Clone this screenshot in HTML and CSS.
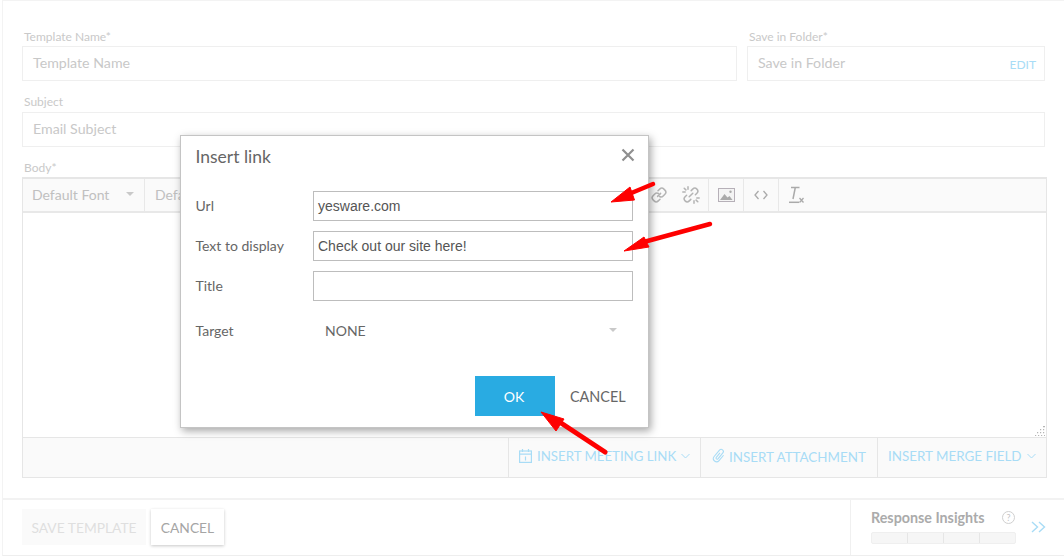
FILE: index.html
```html
<!DOCTYPE html>
<html lang="en">
<head>
<meta charset="utf-8">
<title>Template editor</title>
<link rel="stylesheet" href="styles.css">
</head>
<body>
<div class="page">
  <main class="form">
    <div class="row-top">
      <div class="field field-name">
        <label class="label">Template Name*</label>
        <div class="input">Template Name</div>
      </div>
      <div class="field field-folder">
        <label class="label">Save in Folder*</label>
        <div class="input input-folder"><span>Save in Folder</span><a class="edit">EDIT</a></div>
      </div>
    </div>
    <div class="field field-subject">
      <label class="label">Subject</label>
      <div class="input">Email Subject</div>
    </div>
    <div class="field field-body">
      <label class="label">Body*</label>
      <div class="editor">
        <div class="toolbar">
          <div class="tool-select font-select"><span>Default Font</span><i class="caret"></i></div>
          <div class="tool-select size-select"><span>Default</span></div>
          <div class="tool-spacer"></div>
          <div class="tool-group links">
            <svg class="ico" width="18" height="18" viewBox="0 0 18 18"><g fill="none" stroke="#b4b4b4" stroke-width="1.5" stroke-linecap="round"><path d="M7.6 10.4l3-3"/><path d="M8 4.8l1.7-1.7a3 3 0 0 1 4.2 0l1 1a3 3 0 0 1 0 4.2l-1.7 1.7a3 3 0 0 1-3.6.5"/><path d="M10 13.2l-1.7 1.700a3 3 0 0 1-4.2 0l-1-1a3 3 0 0 1 0-4.2l1.7-1.7a3 3 0 0 1 3.600-.5"/></g></svg>
            <svg class="ico" width="18" height="18" viewBox="0 0 18 18"><g fill="none" stroke="#b4b4b4" stroke-width="1.5" stroke-linecap="round"><path d="M9.200 4.600l1.500-1.500a3 3 0 0 1 4.200 0l0 0a3 3 0 0 1 0 4.200L13.400 8.800"/><path d="M8.800 13.400l-1.500 1.500a3 3 0 0 1-4.200 0l0 0a3 3 0 0 1 0-4.200l1.500-1.500"/><path d="M10.800 7.200l-3.600 3.600"/><path d="M6 .8v2.400M.8 6h2.400M12 17.200v-2.400M17.200 12h-2.400M2.200 2.200l1.700 1.700M15.800 15.800l-1.700-1.700"/></g></svg>
          </div>
          <div class="tool-btn"><svg width="17" height="14" viewBox="0 0 17 14"><rect x=".5" y=".5" width="16" height="13" fill="#f4f4f4" stroke="#b6b0b8"/><path d="M2 12l4.500-6 3 3.500 2-1.500 3 4z" fill="#aaa"/><circle cx="12.500" cy="3.800" r="1.200" fill="#aaa"/></svg></div>
          <div class="tool-btn"><svg width="14" height="10" viewBox="0 0 14 10"><path d="M4.500 1L1 5l3.500 4M9.500 1L13 5l-3.500 4" fill="none" stroke="#aaa" stroke-width="1.300"/></svg></div>
          <div class="tool-btn tool-clear"><svg width="16" height="18" viewBox="0 0 16 18"><path d="M2 1.500h8.500M6.300 1.500L4 13" fill="none" stroke="#aaa" stroke-width="1.500"/><path d="M0 16.300h10" stroke="#aaa" stroke-width="1.500"/><path d="M10.500 12l4 4.500M14.500 12l-4 4.500" stroke="#aaa" stroke-width="1.300"/></svg></div>
        </div>
        <div class="editor-content">
          <svg class="grip" width="10" height="10" viewBox="0 0 10 10"><path d="M8 0h2v1.200H8zM5 3h1.200v1.200H5zM8 3h1.200v1.200H8zM2 6h1.200v1.200H2zM5 6h1.200v1.200H5zM8 6h1.200v1.200H8zM0 9h1.200v1H0zM3 9h1.200v1H3zM6 9h1.200v1H6zM9 9h1v1H9z" fill="#b5b5b5"/></svg>
        </div>
        <div class="editor-bar">
          <div class="bar-item item-meeting">
            <svg width="13" height="14" viewBox="0 0 13 14"><g fill="none" stroke="#a8dcf6" stroke-width="1.200"><rect x=".6" y="2" width="11.800" height="11.400"/><path d="M.6 5.200h11.800M3.500 0v3M9.500 0v3M6.500 7.500v4"/></g></svg>
            <span>INSERT MEETING LINK</span><svg class="chev" width="9" height="6" viewBox="0 0 9 6"><path d="M.5 1l4 4 4-4" fill="none" stroke="#a8dcf6"/></svg>
          </div>
          <div class="bar-item item-attach">
            <svg width="16" height="18" viewBox="0 0 16 16"><g transform="rotate(40 8 8)"><path d="M11 4.500V11.500a3.200 3.200 0 0 1-6.400 0V3.200a2.200 2.200 0 0 1 4.400 0V10.800a1.100 1.100 0 0 1-2.200 0V5" fill="none" stroke="#a8dcf6" stroke-width="1.100"/></g></svg>
            <span>INSERT ATTACHMENT</span>
          </div>
          <div class="bar-item item-merge">
            <span>INSERT MERGE FIELD</span><svg class="chev" width="9" height="6" viewBox="0 0 9 6"><path d="M.5 1l4 4 4-4" fill="none" stroke="#a8dcf6"/></svg>
          </div>
        </div>
      </div>
    </div>
  </main>
  <footer class="footer">
    <div class="actions">
      <button class="btn btn-save">SAVE TEMPLATE</button>
      <button class="btn btn-cancel">CANCEL</button>
    </div>
    <div class="insights">
      <div class="insights-main">
        <div class="insights-head"><span class="insights-title">Response Insights</span><span class="help">?</span></div>
        <div class="meter"><i></i><i></i><i></i><i></i></div>
      </div>
      <svg class="expand" width="15" height="12" viewBox="0 0 15 12"><path d="M1 1l5.500 5L1 11M8 1l5.500 5L8 11" fill="none" stroke="#a8dcf6" stroke-width="1.400"/></svg>
    </div>
  </footer>
</div>

<div class="dialog">
  <div class="dialog-head">
    <h2 class="dialog-title">Insert link</h2>
    <svg class="close" width="14" height="14" viewBox="0 0 14 14"><path d="M1.500 1.500l11 11M12.500 1.500l-11 11" stroke="#8f8f8f" stroke-width="2.200"/></svg>
  </div>
  <div class="dialog-body">
    <div class="d-row"><label class="d-label">Url</label><div class="d-input">yesware.com</div></div>
    <div class="d-row"><label class="d-label">Text to display</label><div class="d-input">Check out our site here!</div></div>
    <div class="d-row"><label class="d-label">Title</label><div class="d-input"></div></div>
    <div class="d-row d-target"><label class="d-label">Target</label><div class="d-select"><span>NONE</span><i class="caret"></i></div></div>
  </div>
  <div class="dialog-foot">
    <button class="d-ok">OK</button>
    <button class="d-cancel">CANCEL</button>
  </div>
</div>

<svg class="arrows" width="1064" height="558" viewBox="0 0 1064 558">
  <g fill="#fe0000" stroke="#fe0000" stroke-linejoin="round">
    <path d="M653 184L629 194" stroke-width="4.500" stroke-linecap="round"/>
    <path d="M611 202L630 187 634.500 200z" stroke-width="1"/>
    <path d="M710 224L640 243" stroke-width="4.500" stroke-linecap="round"/>
    <path d="M624 251L644 237 649 247z" stroke-width="1"/>
    <path d="M605 452L558 421" stroke-width="5" stroke-linecap="round"/>
    <path d="M541 412L564 419 556 431z" stroke-width="1"/>
  </g>
</svg>
</body>
</html>
```

FILE: styles.css
```css
* { box-sizing: border-box; }
html, body { margin: 0; padding: 0; }
body {
  width: 1064px;
  height: 558px;
  overflow: hidden;
  background: #fff;
  font-family: Lato, "Liberation Sans", sans-serif;
  position: relative;
}
.page {
  margin-left: 2px;
  height: 556px;
  border-top: 1px solid #f3f3f3;
  border-left: 1px solid #f3f3f3;
  border-bottom: 1px solid #eee;
  display: flex;
  flex-direction: column;
}
.form {
  flex: 1;
  padding: 28px 17px 0 19px;
}
.row-top { display: flex; gap: 10px; padding-right: 2px; }
.field-name { flex: 1; }
.field-folder { width: 298px; }
.field-subject { margin: 13px 2px 0 0; }
.field-subject .label { height: 18px; }
.field-body { margin-top: 13px; }
.label {
  display: block;
  height: 17px;
  padding-left: 2px;
  font-size: 12px;
  line-height: 15px;
  color: #c9c9c9;
}
.input {
  height: 35px;
  border: 1px solid #efefef;
  padding: 0 10px;
  font-size: 14.200px;
  line-height: 32px;
  color: #c8c8c8;
}
.input-folder { display: flex; justify-content: space-between; }
.edit {
  margin-right: -2px;
  font-size: 12px;
  line-height: 12px;
  padding: 12px 0 0;
  color: #a8dcf6;
}
.editor {
  height: 301px;
  display: flex;
  flex-direction: column;
  border: 1px solid #e6e6e6;
  border-width: 2px 1px 1px;
}
.toolbar {
  height: 34px;
  display: flex;
  background: #fafafa;
  border-bottom: 2px solid #e8e8e8;
}
.tool-select {
  display: flex;
  align-items: center;
  font-size: 14px;
  color: #c0c0c0;
  padding-left: 9px;
  padding-bottom: 2px;
}
.font-select { width: 122px; border-right: 1px solid #e8e8e8; justify-content: space-between; padding-right: 10px; }
.size-select { padding-left: 10px; }
.caret {
  display: block;
  width: 0;
  height: 0;
  border: 4px solid transparent;
  border-top: 4px solid #c9c9c9;
  border-bottom: 0;
}
.tool-spacer { flex: 1; }
.tool-group { display: flex; align-items: center; gap: 14px; padding-right: 8px; border-right: 1px solid #e8e8e8; }
.tool-btn {
  width: 35px;
  display: flex;
  align-items: center;
  justify-content: center;
  border-right: 1px solid #e8e8e8;
}
.tool-clear { border-right: 0; margin-right: 232px; }
.editor-content { flex: 1; position: relative; background: #fff; }
.grip { position: absolute; right: 1px; bottom: 1px; }
.editor-bar {
  height: 40px;
  display: flex;
  justify-content: flex-end;
  background: #fafafa;
  border-top: 1px solid #e6e6e6;
}
.bar-item {
  display: flex;
  align-items: center;
  gap: 5px;
  padding-bottom: 3px;
  border-left: 1px solid #e6e6e6;
  font-size: 13.400px;
  color: #a8dcf6;
  white-space: nowrap;
}
.item-meeting { width: 192px; padding-left: 10px; font-size: 13.250px; }
.item-attach { width: 177px; padding-left: 10px; gap: 2px; }
.item-merge { width: 169px; padding-left: 10px; }
.item-attach span { position: relative; top: 1px; }
.footer {
  height: 57px;
  display: flex;
  justify-content: space-between;
  border-top: 2px solid #f2f2f2;
}
.actions { display: flex; gap: 5px; padding: 9px 0 0 19px; }
.btn {
  height: 36px;
  border: 0;
  font: inherit;
  font-size: 13.800px;
}
.btn-save { width: 124px; background: #fafafa; color: #dfdfdf; }
.btn-cancel {
  width: 73px;
  background: #fff;
  color: #a5a5a5;
  box-shadow: 0 1px 3px rgba(0, 0, 0, .22);
}
.insights {
  width: 214px;
  display: flex;
  border-left: 1px solid #f0f0f0;
  padding: 0 0 0 20px;
}
.insights-main { width: 145px; }
.insights-head { display: flex; justify-content: space-between; align-items: center; height: 32px; padding: 2px 1px 0 0; }
.insights-title { font-size: 14.300px; font-weight: 700; color: #ababab; }
.help {
  width: 13px;
  height: 13px;
  border: 1px solid #d0d0d0;
  border-radius: 50%;
  font-size: 9px;
  line-height: 11px;
  text-align: center;
  color: #c4c4c4;
}
.meter {
  height: 12px;
  display: flex;
  background: #f6f6f6;
  border: 1px solid #efefef;
  border-radius: 2px;
}
.meter i { flex: 1; border-right: 1px solid #e6e6e6; }
.meter i:last-child { border-right: 0; }
.expand { margin: 21px 0 0 15px; }

.dialog {
  position: absolute;
  left: 180px;
  top: 135px;
  width: 469px;
  height: 293px;
  background: #fff;
  border: 1px solid #c4c4c4;
  box-shadow: 2px 3px 8px rgba(0, 0, 0, .35);
  color: #666;
}
.dialog-head { display: flex; justify-content: space-between; padding: 11px 13px 0 14.500px; height: 55px; }
.dialog-title { margin: 0; font-size: 17.500px; line-height: 20px; font-weight: 400; color: #666; }
.close { margin-top: 1px; }
.dialog-body { display: flex; flex-direction: column; gap: 10px; padding-right: 15px; }
.d-row { display: flex; align-items: center; height: 30px; }
.d-label { width: 132px; padding: 0 0 2px 14.500px; font-size: 14px; color: #666; }
.d-input {
  width: 320px;
  height: 30px;
  border: 1px solid #bdbdbd;
  padding-left: 4px;
  font-family: "Liberation Sans", Arial, sans-serif;
  font-size: 14px;
  line-height: 28px;
  color: #555;
}
.d-target { margin-top: 4px; }
.d-target .d-label { padding-bottom: 0; }
.d-select {
  width: 320px;
  display: flex;
  justify-content: space-between;
  align-items: center;
  padding: 0 16px 0 12px;
  font-size: 14px;
  color: #666;
}
.dialog-foot { display: flex; padding: 31px 0 0 294px; align-items: center; }
.d-ok {
  width: 80px;
  height: 40px;
  padding: 0 2px 0 0;
  border: 0;
  background: #29abe2;
  color: #fff;
  font: inherit;
  font-size: 14px;
}
.d-cancel {
  margin-left: 15px;
  padding: 0;
  border: 0;
  background: none;
  font: inherit;
  font-size: 14.400px;
  color: #666;
}
.arrows { position: absolute; left: 0; top: 0; pointer-events: none; }
```
